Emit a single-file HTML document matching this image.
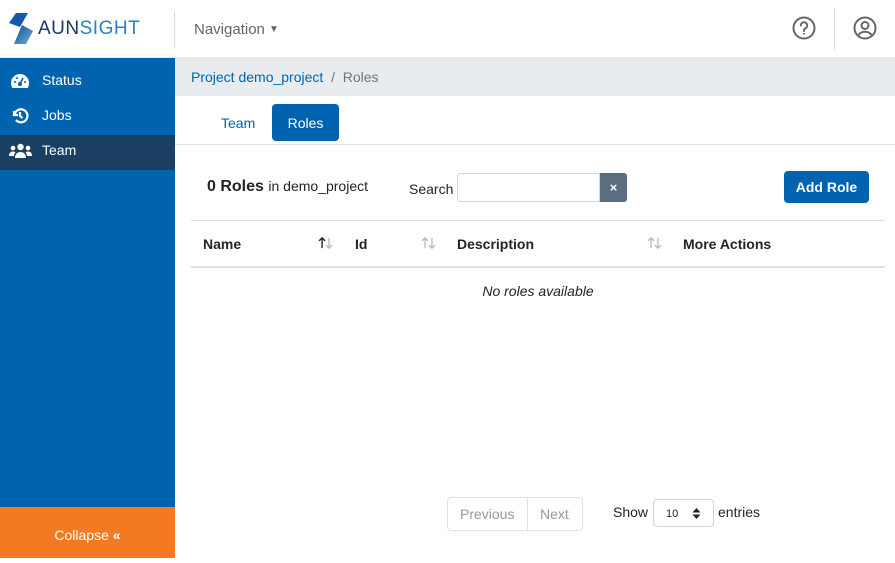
<!DOCTYPE html>
<html><head><style>
*{box-sizing:border-box;margin:0;padding:0}
body{width:895px;height:558px;position:relative;font-family:"Liberation Sans",sans-serif;color:#212529;background:#fff;overflow:hidden;font-size:14px}
.abs{position:absolute}
</style></head><body>
<div class="abs" style="left:0;top:0;width:895px;height:58px;background:#fff;border-bottom:1px solid #e6e6e6"></div>
<svg class="abs" style="left:8px;top:13px" width="26" height="32" viewBox="0 0 26 32">
<defs><linearGradient id="g" x1="0" y1="0" x2="1" y2="1"><stop offset="0" stop-color="#0f4c8c"/><stop offset="1" stop-color="#6bb0e0"/></linearGradient></defs>
<polygon points="8,0 20,0 12,14 1,10" fill="#135ba8"/>
<polygon points="14,12 25,18 18,31 6,31" fill="url(#g)"/>
</svg>
<div class="abs" style="left:38px;top:18px;font-size:19px;letter-spacing:0.5px;color:#1a3565">AUN<span style="color:#2a7fc0">SIGHT</span></div>
<div class="abs" style="left:174px;top:11px;width:1px;height:37px;background:#ddd"></div>
<div class="abs" style="left:194px;top:21px;font-size:15px;color:#666">Navigation <span style="font-size:10px;vertical-align:2px">▼</span></div>
<svg class="abs" style="left:792px;top:16px" width="24" height="24" viewBox="0 0 24 24" fill="none" stroke="#666" stroke-width="2"><circle cx="12" cy="12" r="10.5"/><path d="M8.8 9.5a3.2 3.2 0 1 1 4.5 2.9c-.9.4-1.3 1-1.3 2v.6" stroke-linecap="round"/><circle cx="12" cy="17.8" r="1" fill="#666" stroke="none"/></svg>
<div class="abs" style="left:834px;top:8px;width:1px;height:42px;background:#ddd"></div>
<svg class="abs" style="left:853px;top:16px" width="24" height="24" viewBox="0 0 24 24" fill="none" stroke="#666" stroke-width="2"><circle cx="12" cy="12" r="10.5"/><circle cx="12" cy="9.5" r="3.5"/><path d="M5.5 19c1.5-2.5 4-3.3 6.5-3.3s5 .8 6.5 3.3"/></svg>
<div class="abs" style="left:0;top:58px;width:175px;height:449px;background:#0063b0"></div>
<div class="abs" style="left:0;top:135px;width:175px;height:35px;background:#1b3f63"></div>
<svg class="abs" style="left:10px;top:73px" width="20" height="16" viewBox="0 0 20 16"><path d="M10 1A9 9 0 0 0 1 10c0 2 .6 3.7 1.5 5h15c1-1.3 1.5-3 1.5-5A9 9 0 0 0 10 1z" fill="#fff"/><circle cx="10" cy="11" r="2" fill="#0063b0"/><path d="M10 11l3-6" stroke="#0063b0" stroke-width="1.6"/><circle cx="5" cy="9" r="1" fill="#0063b0"/><circle cx="7" cy="5" r="1" fill="#0063b0"/><circle cx="15" cy="9" r="1" fill="#0063b0"/></svg>
<svg class="abs" style="left:11px;top:107px" width="18" height="18" viewBox="0 0 18 18" fill="none" stroke="#fff" stroke-width="2.2"><path d="M3 4v4h4"/><path d="M3.5 8A6.5 6.5 0 1 1 5 13"/><path d="M9 5v4l2.5 2"/></svg>
<svg class="abs" style="left:9px;top:143px" width="23" height="16" viewBox="0 0 23 16" fill="#fff"><circle cx="11.5" cy="4" r="3.2"/><circle cx="4" cy="5" r="2.3"/><circle cx="19" cy="5" r="2.3"/><path d="M6 15c0-4 2.5-6 5.5-6s5.5 2 5.5 6z"/><path d="M0 13c0-3 1.5-4.5 4-4.5 1 0 1.8.3 2.5.8C5.5 10.5 5 12 5 13z"/><path d="M23 13c0-3-1.5-4.5-4-4.5-1 0-1.8.3-2.5.8 1 1.2 1.5 2.7 1.5 3.7z"/></svg>
<div class="abs" style="left:42px;top:63px;color:#fff;font-size:14px;line-height:35px">
<div style="height:35px">Status</div><div style="height:35px">Jobs</div><div style="height:35px">Team</div>
</div>
<div class="abs" style="left:0;top:507px;width:175px;height:51px;background:#f37a21;color:#fff;text-align:center;line-height:56px;font-size:14px">Collapse <b>«</b></div>
<div class="abs" style="left:175px;top:58px;width:720px;height:38px;background:#e9ecef"></div>
<div class="abs" style="left:191px;top:69px;font-size:14px;color:#6c757d"><span style="color:#0063b0">Project demo_project</span> &nbsp;/&nbsp; Roles</div>
<div class="abs" style="left:175px;top:144px;width:720px;height:1px;background:#dee2e6"></div>
<div class="abs" style="left:221px;top:115px;color:#0063b0;font-size:14px">Team</div>
<div class="abs" style="left:272px;top:104px;width:67px;height:37px;background:#0063b0;border-radius:4px;color:#fff;text-align:center;line-height:38px;font-size:14px">Roles</div>
<div class="abs" style="left:207px;top:178px;font-size:16px"><b>0 Roles</b> <span style="font-size:14px">in demo_project</span></div>
<div class="abs" style="left:409px;top:181px;font-size:14px">Search</div>
<div class="abs" style="left:457px;top:173px;width:143px;height:29px;border:1px solid #ced4da;border-radius:3px 0 0 3px"></div>
<div class="abs" style="left:600px;top:173px;width:27px;height:29px;background:#5a6e7f;border-radius:0 3px 3px 0;color:#fff;text-align:center;line-height:29px;font-size:13px;font-weight:bold">×</div>
<div class="abs" style="left:784px;top:171px;width:85px;height:32px;background:#0063b0;border-radius:4px;color:#fff;text-align:center;line-height:32px;font-size:14px;font-weight:bold">Add Role</div>
<div class="abs" style="left:191px;top:220px;width:694px;height:1px;background:#dee2e6"></div>
<div class="abs" style="left:191px;top:266px;width:694px;height:2px;background:#dee2e6"></div>
<div class="abs" style="left:203px;top:236px;font-weight:bold;font-size:14px">Name</div>
<svg class="abs" style="left:318px;top:237px" width="15" height="12" viewBox="0 0 17 14" fill="none" stroke-width="1.6"><path d="M4.5 13V1M1 4.5L4.5 1 8 4.5" stroke="#222"/><path d="M12.5 1v12M9 9.5l3.5 3.5 3.5-3.5" stroke="#bbb"/></svg>
<div class="abs" style="left:355px;top:236px;font-weight:bold;font-size:14px">Id</div>
<svg class="abs" style="left:421px;top:237px" width="15" height="12" viewBox="0 0 17 14" fill="none" stroke-width="1.6" stroke="#bbb"><path d="M4.5 13V1M1 4.5L4.5 1 8 4.5"/><path d="M12.5 1v12M9 9.5l3.5 3.5 3.5-3.5"/></svg>
<div class="abs" style="left:457px;top:236px;font-weight:bold;font-size:14px">Description</div>
<svg class="abs" style="left:647px;top:237px" width="15" height="12" viewBox="0 0 17 14" fill="none" stroke-width="1.6" stroke="#bbb"><path d="M4.5 13V1M1 4.5L4.5 1 8 4.5"/><path d="M12.5 1v12M9 9.5l3.5 3.5 3.5-3.5"/></svg>
<div class="abs" style="left:683px;top:236px;font-weight:bold;font-size:14px">More Actions</div>
<div class="abs" style="left:191px;top:283px;width:694px;text-align:center;font-style:italic;font-size:14px">No roles available</div>
<div class="abs" style="left:447px;top:497px;width:136px;height:34px;border:1px solid #dee2e6;border-radius:4px"></div>
<div class="abs" style="left:527px;top:497px;width:1px;height:34px;background:#dee2e6"></div>
<div class="abs" style="left:460px;top:506px;color:#999;font-size:14px">Previous</div>
<div class="abs" style="left:540px;top:506px;color:#999;font-size:14px">Next</div>
<div class="abs" style="left:613px;top:504px;font-size:14px">Show</div>
<div class="abs" style="left:653px;top:499px;width:61px;height:28px;border:1px solid #ced4da;border-radius:4px;font-size:11px;padding:8px 0 0 12px">10<svg style="position:absolute;left:38px;top:7px" width="9" height="13" viewBox="0 0 9 13" fill="#222"><path d="M0.5 5.5L4.5 1l4 4.5zM0.5 7.5l4 4.5 4-4.5z"/></svg></div>
<div class="abs" style="left:718px;top:504px;font-size:14px">entries</div>
</body></html>
